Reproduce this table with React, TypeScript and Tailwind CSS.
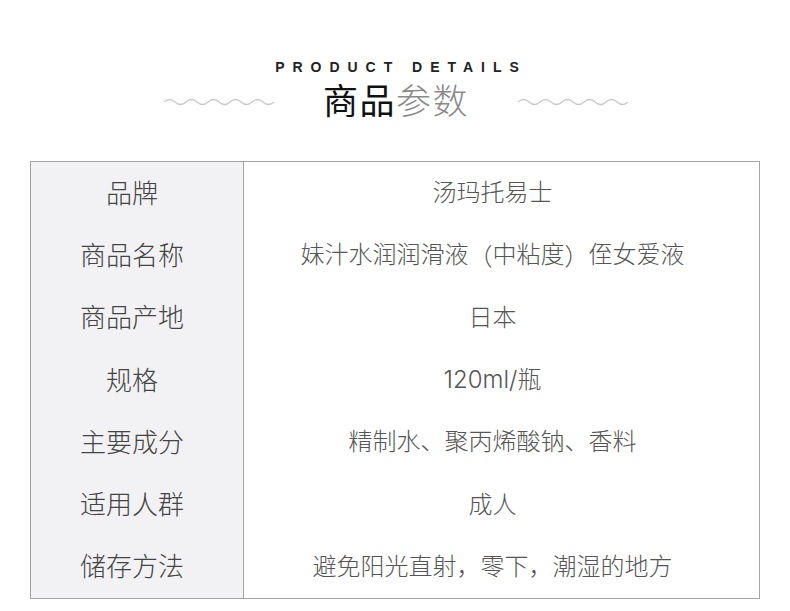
const rows = [
  ['品牌', '汤玛托易士'],
  ['商品名称', '妹汁水润润滑液（中粘度）侄女爱液'],
  ['商品产地', '日本'],
  ['规格', '120ml/瓶'],
  ['主要成分', '精制水、聚丙烯酸钠、香料'],
  ['适用人群', '成人'],
  ['储存方法', '避免阳光直射，零下，潮湿的地方'],
];

function Wave() {
  return (
    <svg width="112" height="10" viewBox="0 0 112 10" fill="none">
      <path
        d="M1 5 Q6.5 0 12 5 T23 5 T34 5 T45 5 T56 5 T67 5 T78 5 T89 5 T100 5 T111 5"
        stroke="#c8c8c8"
        strokeWidth="1.2"
      />
    </svg>
  );
}

// full-width brackets sit centered in the reference, like the TC face draws them
function Value({ text }: { text: string }) {
  const parts = text.split(/([（）])/);
  return (
    <>
      {parts.map((p, i) =>
        p === '（' || p === '）' ? (
          <span key={i} style={{ fontFamily: '"Noto Sans CJK TC", sans-serif' }}>
            {p}
          </span>
        ) : (
          <span key={i}>{p}</span>
        )
      )}
    </>
  );
}

export default function App() {
  return (
    <div
      className="w-[790px] h-[611px] bg-white overflow-hidden"
      style={{ fontFamily: '"Liberation Sans", "Noto Sans CJK SC", sans-serif' }}
    >
      <div className="pt-[58px] flex flex-col items-center">
        <div className="text-[14px] leading-[18px] font-bold tracking-[0.57em] text-[#222] pl-[12px]">
          PRODUCT DETAILS
        </div>
        <div className="flex items-center mt-[4px] pl-[2px]">
          <Wave />
          <div className="mx-[48px] text-[35px] leading-[44px] tracking-[1.5px]">
            <span className="text-[#111] font-normal">商品</span>
            <span className="text-[#8a8a8a] font-light">参数</span>
          </div>
          <Wave />
        </div>
      </div>

      <div
        className="ml-[30px] mt-[37px] w-[730px] border border-[#a5a5a5] flex font-light"
        style={{ fontFamily: 'Inter, "Noto Sans CJK SC", sans-serif' }}
      >
        <div className="w-[213px] bg-[#f2f2f4] border-r border-[#a5a5a5] pr-[10px]">
          {rows.map(([k]) => (
            <div key={k} className="h-[62.3px] flex items-center justify-center text-[26px] text-[#444]">
              {k}
            </div>
          ))}
        </div>
        <div className="flex-1 pr-[18px]">
          {rows.map(([k, v]) => (
            <div key={k} className="h-[62.3px] flex items-center justify-center text-[24px] text-[#555]">
              <Value text={v} />
            </div>
          ))}
        </div>
      </div>
    </div>
  );
}
